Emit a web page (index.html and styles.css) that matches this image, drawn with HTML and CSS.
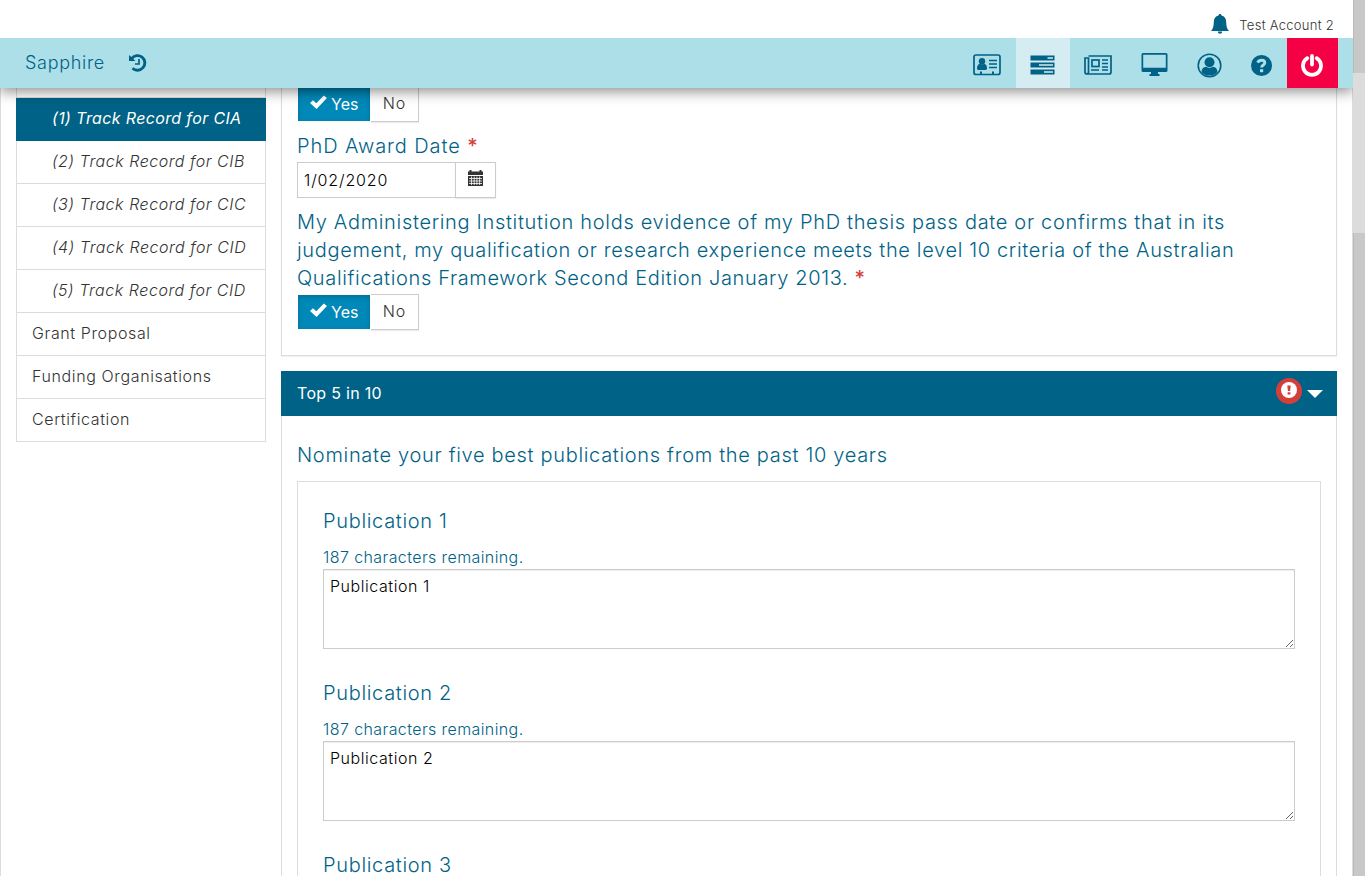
FILE: index.html
```html
<!DOCTYPE html>
<html lang="en">
<head>
<meta charset="utf-8">
<title>Sapphire</title>
<link rel="stylesheet" href="styles.css">
</head>
<body>
<div class="app">
  <div class="page">
    <header class="account">
      <svg class="bell" width="18" height="20" viewBox="0 0 18 20"><path d="M9 0c1 0 1.500.6 1.500 1.600 3 .7 4.700 3 4.700 6.400 0 4.500 1 7 2.800 9H0c1.800-2 2.800-4.500 2.800-9 0-3.400 1.700-5.700 4.700-6.400C7.500.6 8 0 9 0zM6.800 17.500h4.400a2.200 2.200 0 0 1-4.400 0z"/></svg>
      <span class="account-name">Test Account 2</span>
    </header>
    <nav class="navbar">
      <a class="brand">Sapphire</a>
      <svg class="history" width="18" height="18" viewBox="0 0 18 18"><path class="fill" d="M0 1 2.300 3 6.500 7H0z"/><path class="line3" d="M2.600 4.600A7.300 7.300 0 1 1 3.500 14.200"/><path class="line2" d="M10 5v5H6"/></svg>
      <div class="nav-items">
        <a class="nav-item id"><svg width="28" height="22" viewBox="0 0 28 22"><rect class="line2" x="1" y="1" width="26" height="19.500" rx="2"/><circle class="fill" cx="9" cy="7.200" r="3.200"/><path class="fill" d="M4 14.500c0-3 1-4.500 3-4.800q2 1.200 4 0c2 .3 3 1.800 3 4.800 0 1-.6 1.400-1.400 1.400H5.400C4.600 15.900 4 15.500 4 14.500zM7 17.500h2V20H7zM19 17.500h2V20h-2z"/><path class="line2" d="M16 6.500h8M16 10h8M16 13.500h8"/></svg></a>
        <a class="nav-item active"><svg width="25" height="20" viewBox="0 0 25 20"><path class="fill" fill-rule="evenodd" d="M.5.500h24v5H.5zm17 1.700v1.600H23V2.200zM.5 7.500h24v5H.5zm8.500 1.700v1.600h14V9.200zM.5 14.500h24v5H.5zm13.500 1.700v1.600h9v-1.600z"/></svg></a>
        <a class="nav-item news"><svg width="28" height="20" viewBox="0 0 28 20"><path class="line2" d="M4.500 1H27v16q0 2-2 2H3q-2 0-2-2V3h3.500v14q0 2-1.500 2"/><rect class="line2" x="8" y="5" width="7" height="6.500"/><path class="line15" d="M18 5h6M18 8.500h6M18 12h6M7 15h8M18 15h6"/></svg></a>
        <a class="nav-item desk"><svg width="27" height="23" viewBox="0 0 27 23"><path class="fill" fill-rule="evenodd" d="M2 0h23q1.500 0 1.500 1.500v16q0 1.500-1.500 1.500h-8v2h1.500v2h-10v-2H10v-2H2Q.5 19 .5 17.500v-16Q.5 0 2 0zm.2 1.800v13h22.600v-13z"/></svg></a>
        <a class="nav-item user"><svg width="25" height="25" viewBox="0 0 25 25"><circle class="line15" cx="12.500" cy="12.500" r="11.300"/><circle class="fill" cx="12.500" cy="9.300" r="5"/><path class="fill" d="M4.500 19c.3-3.400 1.800-5 4.500-5.200q3.500 2.300 7 0c2.700.2 4.200 1.800 4.500 5.200-2 2.600-5 3.600-8 3.600s-6-1-8-3.600z"/></svg></a>
        <a class="nav-item help"><svg width="21" height="21" viewBox="0 0 21 21"><circle class="fill" cx="10.500" cy="10.500" r="10.500"/><path class="question" d="M6.600 7.600C7.500 5.900 8.800 5.200 10.500 5.200c2 0 3.300 1.200 3.300 2.600 0 2.300-3.200 2.200-3.200 4.800"/><path class="white" d="M9 14.200h3.200v3H9z"/></svg></a>
        <a class="nav-item power"><svg width="22" height="23" viewBox="0 0 22 23"><path class="power-line" d="M6.300 4.200A9 9 0 1 0 15.700 4.200M11 2v8.500"/></svg></a>
      </div>
    </nav>
    <div class="content">
      <aside class="side">
        <a class="side-item cut"></a>
        <a class="side-item sub current"><span>(1) Track Record for CIA</span></a>
        <a class="side-item sub"><span>(2) Track Record for CIB</span></a>
        <a class="side-item sub"><span>(3) Track Record for CIC</span></a>
        <a class="side-item sub"><span>(4) Track Record for CID</span></a>
        <a class="side-item sub"><span>(5) Track Record for CID</span></a>
        <a class="side-item">Grant Proposal</a>
        <a class="side-item">Funding Organisations</a>
        <a class="side-item">Certification</a>
      </aside>
      <main class="main">
        <section class="panel details">
          <div class="toggle">
            <button class="yes"><svg width="17" height="14" viewBox="0 0 17 14"><path d="M0 8 3 5.200l3.300 3L13.800.5 17 3 6.500 14z"/></svg>Yes</button><button class="no">No</button>
          </div>
          <div class="label date-label">PhD Award Date <b>*</b></div>
          <div class="date">
            <div class="date-value">1/02/2020</div>
            <button class="date-button"><svg width="15" height="16" viewBox="0 0 15 16"><path d="M0 1.500h1.500V0h2v1.500h8V0h2v1.500H15V5H0zM0 6h15v10H0z"/><path class="grid" d="M1 8.500h13M1 11h13M1 13.500h13M3.500 6.500V15M6.200 6.500V15M8.900 6.500V15M11.600 6.500V15"/></svg></button>
          </div>
          <div class="label statement"><span class="l1">My Administering Institution holds evidence of my PhD thesis pass date or confirms that in its</span><br><span class="l2">judgement, my qualification or research experience meets the level 10 criteria of the Australian</span><br><span class="l3">Qualifications Framework Second Edition January 2013. <b>*</b></span></div>
          <div class="toggle">
            <button class="yes"><svg width="17" height="14" viewBox="0 0 17 14"><path d="M0 8 3 5.200l3.300 3L13.800.5 17 3 6.500 14z"/></svg>Yes</button><button class="no">No</button>
          </div>
        </section>
        <section class="top5">
          <h2 class="heading"><span>Top 5 in 10</span>
            <svg class="alert" width="26" height="26" viewBox="0 0 26 26"><circle class="red" cx="13" cy="13" r="13"/><circle class="white" cx="13" cy="12" r="8"/><path class="red" d="M11.300 7.500h3.400l-.6 5.500h-2.200zM11.600 14.200h2.800v2.300h-2.800z"/></svg>
            <svg class="caret" width="16" height="8" viewBox="0 0 16 8"><path class="white" d="M0 0h16L8 8z"/></svg>
          </h2>
          <div class="panel list">
            <div class="label nominate">Nominate your five best publications from the past 10 years</div>
            <div class="publications">
              <div class="publication"><div class="label">Publication 1</div><div class="remaining">187 characters remaining.</div><textarea>Publication 1</textarea></div>
              <div class="publication"><div class="label">Publication 2</div><div class="remaining">187 characters remaining.</div><textarea>Publication 2</textarea></div>
              <div class="publication"><div class="label">Publication 3</div></div>
            </div>
          </div>
        </section>
      </main>
    </div>
  </div>
  <div class="scroll"><div class="thumb first"></div><div class="gap"></div><div class="thumb rest"></div></div>
</div>
</body>
</html>
```
FILE: styles.css
```css
* { box-sizing: border-box; }
body { margin: 0; overflow: hidden; background: #fff; color: #333; font: 300 16px/20px Inter, "Open Sans", sans-serif; }
button, textarea { font: inherit; margin: 0; }
.app { display: flex; width: 1365px; height: 876px; }
.page { display: flex; flex-direction: column; width: 1353px; height: 876px; }
.account { display: flex; flex: none; height: 38px; padding: 14px 19px 0 0; justify-content: flex-end; gap: 10px; }
.bell { fill: #006286; }
.account-name { font-size: 13px; line-height: 23px; letter-spacing: .28px; }
.navbar { position: relative; display: flex; flex: none; height: 50px; padding-left: 25px; background: #addfe9; box-shadow: 0 4px 12px rgba(0, 0, 0, .42); clip-path: inset(0 0 -20px 0); color: #006286; }
.brand { width: 104px; font-size: 18px; line-height: 50px; letter-spacing: .7px; }
.history { margin-top: 16px; }
.nav-items { display: flex; margin-left: auto; padding-right: 15px; }
.nav-item { display: flex; align-items: center; justify-content: center; height: 50px; padding: 4px 1px 0 0; }
.id { width: 57px; padding-right: 2px; }
.active { width: 54px; background: #d5edf2; }
.news { width: 57px; }
.desk { width: 56px; padding-top: 2px; }
.user { width: 54px; padding-top: 5px; }
.help { width: 50px; padding-top: 5px; }
.power { width: 51px; background: #f50044; }
.fill { fill: #006286; }
.line15, .line2, .line3 { fill: none; stroke: #006286; stroke-width: 2; }
.line15 { stroke-width: 1.6; }
.line2 { stroke-width: 1.7; }
.line3 { stroke-width: 2.9; }
.question { fill: none; stroke: #addfe9; stroke-width: 2.9; }
.help .white { fill: #addfe9; }
.power-line { fill: none; stroke: #fff; stroke-width: 3.8; stroke-linecap: round; }
.white { fill: #fff; }
.red { fill: #d43f3a; }
.content { display: flex; flex: 1; min-height: 0; align-items: flex-start; gap: 15px; padding: 0 15px; overflow: hidden; border: 1px solid #dcdcdc; border-width: 0 1px; }
.side { flex: none; width: 250px; border: 1px solid #dcdcdc; border-width: 0 1px; }
.side-item { display: block; height: 43px; padding: 0 15px; border-bottom: 1px solid #dcdcdc; line-height: 41px; letter-spacing: .62px; white-space: nowrap; }
.cut { height: 10px; }
.sub { padding-left: 35px; font-style: italic; letter-spacing: .54px; }
.current { margin: 0 -1px; padding-left: 36px; border-color: #006286; background: #006286; color: #fff; font-weight: 400; letter-spacing: .36px; }
.main { width: 1056px; }
.panel { border: 1px solid #dcdcdc; border-top: 0; }
.details { height: 270px; padding: 0 15px; box-shadow: 0 1px 1px rgba(0, 0, 0, .05); }
.toggle { display: flex; height: 36px; }
.details .toggle:first-child { margin-top: -2px; }
.yes { display: flex; width: 74px; height: 36px; padding: 0 0 1px 12px; align-items: center; gap: 4px; border: solid #fff; border-width: 1px; background: #0088b8; box-shadow: inset 0 2px 5px rgba(0, 0, 0, .18); color: #fff; font-weight: 400; }
.yes svg { fill: #fff; margin-top: -3px; }
.no { width: 48px; height: 36px; padding: 0 0 2px; border: 1px solid #ccc; border-left: 0; background: #fff; box-shadow: 0 1px 1px rgba(0, 0, 0, .08); color: #333; letter-spacing: .9px; }
.label { color: #006286; font-size: 20px; line-height: 28px; letter-spacing: .68px; white-space: nowrap; }
.label b { color: #d43f3a; font-weight: 500; }
.date-label { height: 40px; padding-top: 10px; letter-spacing: .9px; }
.date { display: flex; height: 36px; margin-bottom: 10px; }
.date-value { width: 158px; padding-left: 6px; border: 1px solid #ccc; border-right: 0; color: #000; line-height: 35px; letter-spacing: .85px; }
.date-button { width: 41px; height: 36px; padding: 0 0 1px; border: 1px solid #ccc; background: #fff; box-shadow: 0 1px 1px rgba(0, 0, 0, .08); }
.date-button svg { fill: #333; }
.grid { stroke: #fff; stroke-width: .8; }
.statement { height: 86px; }
.l2, .l3 { letter-spacing: .65px; }
.top5 { margin-top: 15px; }
.heading { display: flex; height: 45px; margin: 0; padding: 0 14px 0 16px; background: #006286; color: #fff; font-size: 16px; font-weight: 400; line-height: 44px; letter-spacing: .3px; }
.alert { margin: 7px 5px 0 auto; }
.caret { margin-top: 19px; }
.list { height: 480px; padding: 25px 15px 0; }
.publications { margin-top: 12px; padding: 25px 25px 0; height: 500px; border: 1px solid #dcdcdc; }
.publication { height: 172px; }
.remaining { height: 34px; padding-top: 12px; color: #006286; letter-spacing: .4px; }
.publication textarea { display: block; width: 972px; height: 80px; padding: 6px; border: 1px solid #ccc; outline: 0; box-shadow: inset 0 1px 1px rgba(0, 0, 0, .07); color: #000; resize: vertical; letter-spacing: .55px; }
.scroll { width: 12px; height: 876px; }
.gap { height: 160px; background: #dcdcdc; }
.thumb { background: #c8c8c8; border-left: 1px solid #b9b9b9; }
.first { height: 73px; }
.rest { height: 643px; }
```
